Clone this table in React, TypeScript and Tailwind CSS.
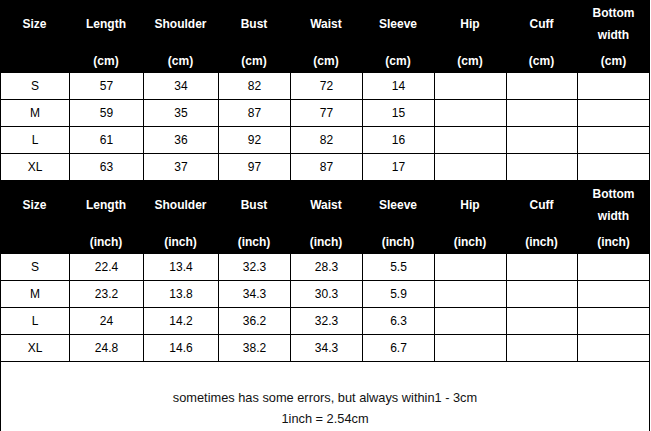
import React from "react";

const W = [
  "w-[69px]",
  "w-[74px]",
  "w-[75px]",
  "w-[72px]",
  "w-[72px]",
  "w-[72px]",
  "w-[72px]",
  "w-[71px]",
  "w-[73px]",
];

const LABELS: React.ReactNode[] = [
  "Size",
  "Length",
  "Shoulder",
  "Bust",
  "Waist",
  "Sleeve",
  "Hip",
  "Cuff",
  <>
    Bottom
    <br />
    width
  </>,
];

const CM = [
  ["S", "57", "34", "82", "72", "14"],
  ["M", "59", "35", "87", "77", "15"],
  ["L", "61", "36", "92", "82", "16"],
  ["XL", "63", "37", "97", "87", "17"],
];

const INCH = [
  ["S", "22.4", "13.4", "32.3", "28.3", "5.5"],
  ["M", "23.2", "13.8", "34.3", "30.3", "5.9"],
  ["L", "24", "14.2", "36.2", "32.3", "6.3"],
  ["XL", "24.8", "14.6", "38.2", "34.3", "6.7"],
];

function Header({ unit }: { unit: string }) {
  return (
    <div className="flex h-[73px] bg-black text-white font-bold text-[12px]">
      {LABELS.map((l, i) => (
        <div key={i} className={`${W[i]} flex flex-col`}>
          <div className="h-[48px] flex items-center justify-center text-center leading-[22px]">
            {l}
          </div>
          <div className="h-[25px] flex items-center justify-center leading-[16px]">
            {i === 0 ? "" : unit}
          </div>
        </div>
      ))}
    </div>
  );
}

function Rows({ data }: { data: string[][] }) {
  return (
    <>
      {data.map((row, r) => (
        <div key={r} className="flex h-[27px] border-b border-black text-[12px] text-black">
          {W.map((w, i) => (
            <div
              key={i}
              className={`${w} border-l border-black flex items-center justify-center ${
                i === W.length - 1 ? "border-r" : ""
              }`}
            >
              {row[i] ?? ""}
            </div>
          ))}
        </div>
      ))}
    </>
  );
}

export default function App() {
  return (
    <div className="w-[651px] h-[431px] bg-white font-['Liberation_Sans',Arial,sans-serif] overflow-hidden">
      <div className="w-[650px]">
        <Header unit="(cm)" />
        <Rows data={CM} />
        <Header unit="(inch)" />
        <Rows data={INCH} />
        <div className="h-[70px] border-l border-r border-b border-black flex flex-col items-center pt-[25px] text-[12.8px] leading-[21px] text-[#111]">
          <div>sometimes has some errors, but always within1 - 3cm</div>
          <div>1inch = 2.54cm</div>
        </div>
      </div>
    </div>
  );
}
